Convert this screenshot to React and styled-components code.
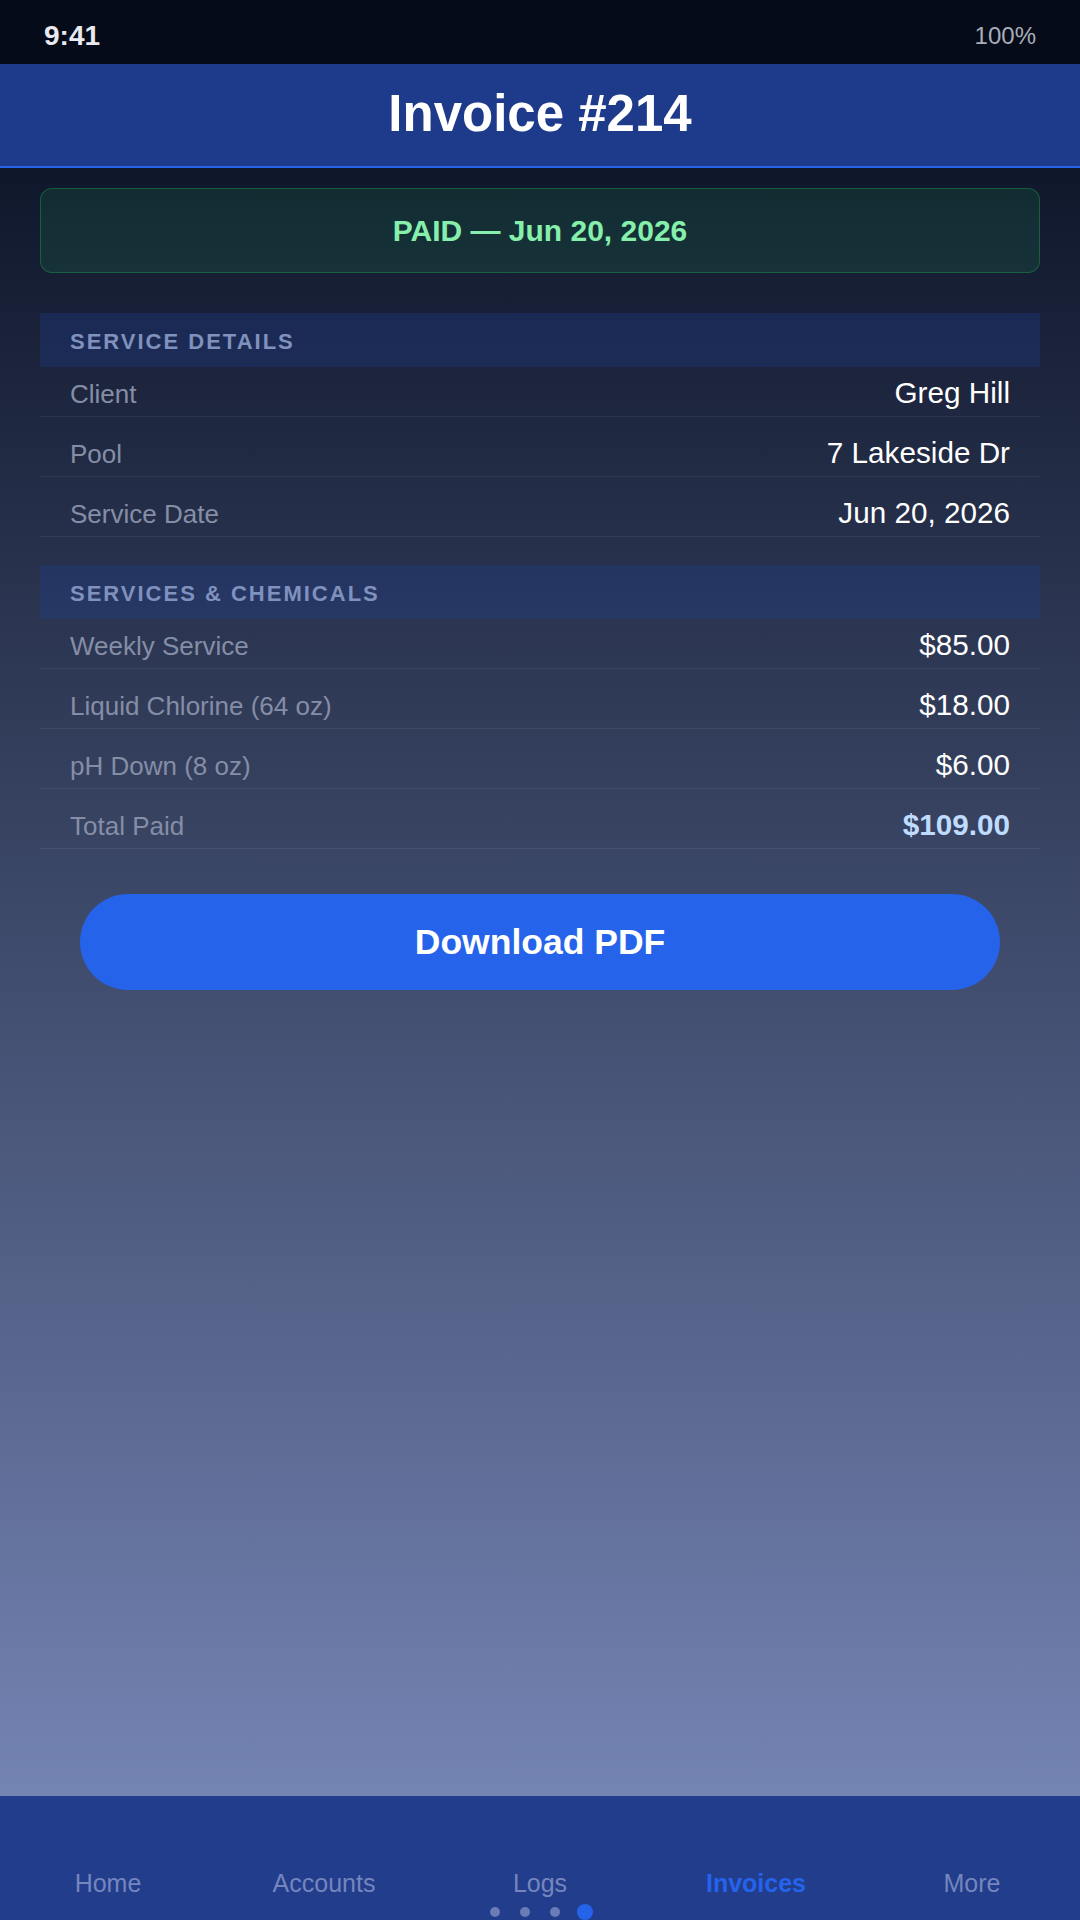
import React from 'react'
import styled, { createGlobalStyle } from 'styled-components'

const GlobalStyle = createGlobalStyle`
    html, body {
        margin: 0;
        padding: 0;
        background: #060b19;
    }
    body {
        font-family: 'Liberation Sans', Arial, sans-serif;
        -webkit-font-smoothing: antialiased;
    }
    * {
        box-sizing: border-box;
    }
`

const Screen = styled.div`
    width: 1080px;
    height: 1920px;
    display: flex;
    flex-direction: column;
    overflow: hidden;
`

const StatusBar = styled.div`
    height: 64px;
    flex-shrink: 0;
    background: #060b19;
    display: flex;
    align-items: center;
    justify-content: space-between;
    padding: 8px 44px 0 44px;

    .time {
        font-size: 28px;
        font-weight: bold;
        color: #e8eaf0;
    }
    .battery {
        font-size: 24px;
        color: #a9adb8;
    }
`

const TitleBar = styled.header`
    height: 104px;
    flex-shrink: 0;
    background: #1e3a8a;
    border-bottom: 2px solid #2563eb;
    display: flex;
    align-items: center;
    justify-content: center;
    padding-bottom: 4px;

    h1 {
        margin: 0;
        font-size: 51px;
        font-weight: bold;
        color: #ffffff;
    }
`

const Main = styled.main`
    flex: 1;
    background: linear-gradient(180deg, #0f172b 0%, #7484b3 100%);
    padding: 20px 40px;
    display: flex;
    flex-direction: column;
`

const PaidBanner = styled.div`
    height: 85px;
    border-radius: 12px;
    background: rgba(34, 197, 94, 0.12);
    border: 1px solid rgba(34, 197, 94, 0.32);
    display: flex;
    align-items: center;
    justify-content: center;
    font-size: 30px;
    font-weight: bold;
    color: #86efac;
    margin-bottom: 40px;
`

const Section = styled.section`
    display: flex;
    flex-direction: column;
    margin-bottom: 28px;
`

const SectionHead = styled.div`
    height: 54px;
    background: rgba(32, 62, 150, 0.3);
    padding: 0 30px;
    display: flex;
    align-items: center;
    padding-top: 3px;
    font-size: 22px;
    font-weight: bold;
    letter-spacing: 2px;
    text-transform: uppercase;
    color: #7f91bd;
`

const Rows = styled.div`
    display: flex;
    flex-direction: column;
    gap: 10px;
`

const Row = styled.div`
    height: 50px;
    padding: 9px 30px 0 30px;
    display: flex;
    align-items: baseline;
    justify-content: space-between;
    border-bottom: 1px solid rgba(255, 255, 255, 0.07);
    line-height: 34px;
`

const Label = styled.span`
    font-size: 26px;
    color: #858ea6;
`

const Value = styled.span`
    font-size: 29.7px;
    color: ${p => (p.$total ? '#bfdbfe' : '#ffffff')};
    font-weight: ${p => (p.$total ? 'bold' : 'normal')};
`

const DownloadButton = styled.button`
    margin: 17px 40px 0 40px;
    height: 96px;
    border: none;
    border-radius: 48px;
    background: #2563eb;
    color: #ffffff;
    font-family: inherit;
    font-size: 35.5px;
    font-weight: bold;
    cursor: pointer;
`

const BottomNav = styled.nav`
    height: 124px;
    flex-shrink: 0;
    background: #213d8b;
    display: flex;
    flex-direction: column;
    justify-content: flex-end;
`

const Tabs = styled.div`
    display: grid;
    grid-template-columns: repeat(5, 1fr);
`

const Tab = styled.div`
    text-align: center;
    font-size: 25px;
    line-height: 30px;
    color: ${p => (p.$active ? '#2563eb' : '#7585bd')};
    font-weight: ${p => (p.$active ? 'bold' : 'normal')};
`

const Dots = styled.div`
    height: 16px;
    margin-top: 6px;
    display: flex;
    align-items: center;
    justify-content: center;
    gap: 20px;
    padding-left: 2px;
`

const Dot = styled.span`
    width: ${p => (p.$active ? '16px' : '10px')};
    height: ${p => (p.$active ? '16px' : '10px')};
    border-radius: 50%;
    background: ${p => (p.$active ? '#2563eb' : '#6b7bb6')};
    margin-left: ${p => (p.$active ? '-3px' : '0')};
`

const details = [
    ['Client', 'Greg Hill'],
    ['Pool', '7 Lakeside Dr'],
    ['Service Date', 'Jun 20, 2026'],
]

const items = [
    ['Weekly Service', '$85.00'],
    ['Liquid Chlorine (64 oz)', '$18.00'],
    ['pH Down (8 oz)', '$6.00'],
]

const tabs = ['Home', 'Accounts', 'Logs', 'Invoices', 'More']

export default function App() {
    return (
        <>
            <GlobalStyle />
            <Screen>
                <StatusBar>
                    <span className='time'>9:41</span>
                    <span className='battery'>100%</span>
                </StatusBar>
                <TitleBar>
                    <h1>Invoice #214</h1>
                </TitleBar>
                <Main>
                    <PaidBanner>PAID — Jun 20, 2026</PaidBanner>

                    <Section>
                        <SectionHead>Service Details</SectionHead>
                        <Rows>
                            {details.map(([k, v]) => (
                                <Row key={k}>
                                    <Label>{k}</Label>
                                    <Value>{v}</Value>
                                </Row>
                            ))}
                        </Rows>
                    </Section>

                    <Section>
                        <SectionHead>Services &amp; Chemicals</SectionHead>
                        <Rows>
                            {items.map(([k, v]) => (
                                <Row key={k}>
                                    <Label>{k}</Label>
                                    <Value>{v}</Value>
                                </Row>
                            ))}
                            <Row>
                                <Label>Total Paid</Label>
                                <Value $total>$109.00</Value>
                            </Row>
                        </Rows>
                    </Section>

                    <DownloadButton>Download PDF</DownloadButton>
                </Main>
                <BottomNav>
                    <Tabs>
                        {tabs.map(t => (
                            <Tab key={t} $active={t === 'Invoices'}>{t}</Tab>
                        ))}
                    </Tabs>
                    <Dots>
                        <Dot />
                        <Dot />
                        <Dot />
                        <Dot $active />
                    </Dots>
                </BottomNav>
            </Screen>
        </>
    )
}
